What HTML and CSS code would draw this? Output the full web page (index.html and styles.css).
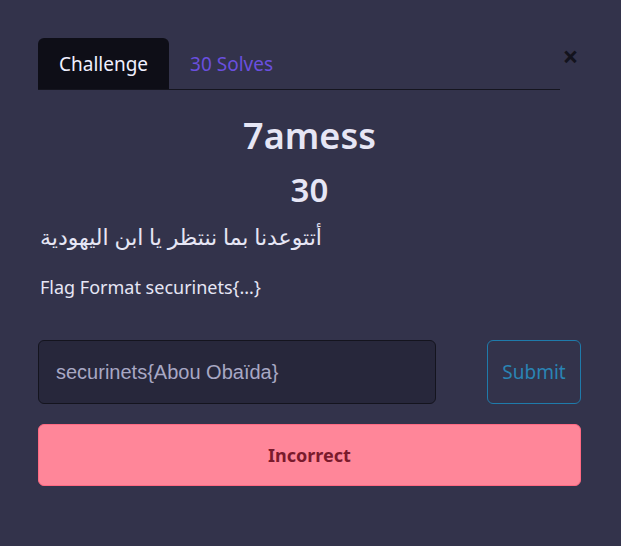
FILE: index.html
```html
<!DOCTYPE html>
<html lang="en">
<head>
<meta charset="utf-8">
<link rel="stylesheet" href="styles.css">
</head>
<body>
<div class="modal">
  <div class="header">
    <nav class="tabs">
      <span class="tab active">Challenge</span>
      <span class="tab link">30 Solves</span>
    </nav>
    <span class="close">&times;</span>
  </div>
  <h1 class="title">7amess</h1>
  <h2 class="value">30</h2>
  <p class="desc arabic">أتتوعدنا بما ننتظر يا ابن اليهودية</p>
  <p class="desc format">Flag Format securinets{...}</p>
  <div class="submit-row">
    <div class="input">securinets{Abou Obaïda}</div>
    <button class="submit">Submit</button>
  </div>
  <div class="result">Incorrect</div>
</div>
</body>
</html>
```
FILE: styles.css
```css
html, body {
  margin: 0;
  padding: 0;
  background: #33334b;
  height: 100%;
}
body {
  font-family: "Noto Sans", "DejaVu Sans", sans-serif;
  color: #e6e6f5;
}
.modal {
  padding: 38px 40px 0 38px;
}
.header {
  display: flex;
  align-items: flex-start;
}
.tabs {
  flex: 1;
  display: flex;
  border-bottom: 1px solid #15151f;
  height: 51px;
}
.tab {
  font-size: 19px;
  line-height: 25px;
  padding: 14px 21px 12px 21px;
}
.tab.active {
  background: #0e0e17;
  color: #f0f0ff;
  border-radius: 6px 6px 0 0;
}
.tab.link {
  color: #6a4fdf;
}
.close {
  width: 21px;
  height: 36px;
  line-height: 36px;
  text-align: center;
  font-size: 28px;
  font-weight: 700;
  color: #13131d;
}
.title {
  text-align: center;
  font-size: 36px;
  font-weight: 600;
  line-height: 43px;
  margin: 24px 0 0 0;
}
.value {
  text-align: center;
  font-size: 33px;
  font-weight: 600;
  line-height: 40px;
  margin: 13px 0 0 0;
}
.desc {
  margin: 0;
  font-size: 18px;
  line-height: 26px;
  padding-left: 2px;
}
.arabic {
  font-size: 22px;
  line-height: 30px;
  margin-top: 11px;
  direction: ltr;
  text-align: left;
}
.format {
  margin-top: 23px;
}
.submit-row {
  display: flex;
  justify-content: space-between;
  margin-top: 40px;
}
.input {
  width: 396px;
  height: 62px;
  box-sizing: content-box;
  background: #27273b;
  border: 1px solid #14141e;
  border-radius: 6px;
  font-family: "Liberation Sans", Arial, sans-serif;
  font-size: 20px;
  line-height: 62px;
  color: #a8a8c4;
  text-indent: 17px;
}
.submit {
  width: 94px;
  height: 64px;
  background: transparent;
  border: 1px solid #1f7bab;
  border-radius: 6px;
  color: #2a84b4;
  font-family: "Noto Sans", sans-serif;
  font-size: 19px;
  padding: 0;
}
.result {
  margin-top: 20px;
  height: 60px;
  background: #ff8699;
  border: 1px solid #ff6a83;
  border-radius: 6px;
  text-align: center;
  line-height: 60px;
  font-size: 18px;
  font-weight: 700;
  color: #7a1a2c;
}
```
